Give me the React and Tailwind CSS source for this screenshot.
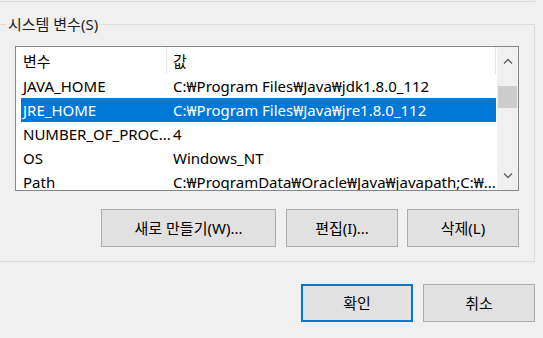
import React from 'react';

const FONT = { fontFamily: '"Noto Sans", "Noto Sans CJK KR", sans-serif' };

const rows = [
  { name: 'JAVA_HOME', value: 'C:₩Program Files₩Java₩jdk1.8.0_112' },
  { name: 'JRE_HOME', value: 'C:₩Program Files₩Java₩jre1.8.0_112', selected: true },
  { name: 'NUMBER_OF_PROC...', value: '4' },
  { name: 'OS', value: 'Windows_NT' },
  { name: 'Path', value: 'C:₩ProgramData₩Oracle₩Java₩javapath;C:₩...' },
];

function Chevron({ up }) {
  return (
    <svg width="10" height="6" viewBox="0 0 10 6" className="block">
      <path
        d={up ? 'M1 5.5 L5 1.5 L9 5.5' : 'M1 0.5 L5 4.5 L9 0.5'}
        fill="none"
        stroke="#606060"
        strokeWidth="1.3"
      />
    </svg>
  );
}

function Button({ children, width, primary }) {
  return (
    <div
      className={`h-[38px] flex items-center justify-center bg-[#e1e1e1] text-[15px] text-black ${
        primary ? 'border-2 border-[#0078d7]' : 'border border-[#adadad]'
      } ${width}`}
    >
      {children}
    </div>
  );
}

export default function App() {
  return (
    <div className="w-[543px] h-[338px] bg-[#f0f0f0] overflow-hidden" style={FONT}>
      {/* edge of the group above */}
      <div className="h-[2px] w-[535px] border-b border-r border-[#dcdcdc]" />

      {/* 시스템 변수 group */}
      <div className="relative mt-[22px] w-[535px] h-[238px] border-t border-r border-b border-[#dcdcdc]">
        <span className="absolute left-[6px] top-[-13px] px-[2px] bg-[#f0f0f0] text-[15px] leading-[24px] text-[#1e1e1e]">
          시스템 변수(S)
        </span>

        <div className="ml-[15px] mt-[21px] w-[504px] h-[145px] border border-[#828790] bg-white flex overflow-hidden">
          <div className="w-[481px] flex flex-col">
            {/* header */}
            <div className="h-[27px] shrink-0 flex text-[15px] text-black">
              <div className="w-[151px] pl-[7px] pt-[2px] flex items-center border-r border-[#e5e5e5]">변수</div>
              <div className="flex-1 pl-[6px] pt-[2px] flex items-center border-r border-[#e5e5e5]">값</div>
              <div className="w-[1px]" />
            </div>
            {rows.map((r) => (
              <div
                key={r.name}
                className={`ml-[5px] w-[475px] h-[24px] shrink-0 flex items-center text-[15px] whitespace-nowrap ${
                  r.selected ? 'bg-[#0078d7] text-white' : 'text-black'
                }`}
              >
                <div className="w-[152px] pl-[2px] overflow-hidden">{r.name}</div>
                <div className="flex-1 overflow-hidden">{r.value}</div>
              </div>
            ))}
          </div>

          {/* scrollbar */}
          <div className="w-[21px] bg-[#f0f0f0] flex flex-col items-center">
            <div className="h-[24px] flex items-center justify-center pt-[3px]">
              <Chevron up />
            </div>
            <div className="h-[15px]" />
            <div className="w-[19px] h-[22px] bg-[#cdcdcd]" />
            <div className="flex-1" />
            <div className="h-[24px] flex items-center justify-center pb-[4px]">
              <Chevron />
            </div>
          </div>
        </div>

        <div className="mt-[18px] ml-[101px] flex gap-[10px]">
          <Button width="w-[175px]">새로 만들기(W)...</Button>
          <Button width="w-[112px]">편집(I)...</Button>
          <Button width="w-[112px] -ml-[1px]">삭제(L)</Button>
        </div>
      </div>

      <div className="mt-[22px] ml-[301px] flex gap-[10px]">
        <Button width="w-[112px]" primary>
          확인
        </Button>
        <Button width="w-[112px]">취소</Button>
      </div>
    </div>
  );
}
